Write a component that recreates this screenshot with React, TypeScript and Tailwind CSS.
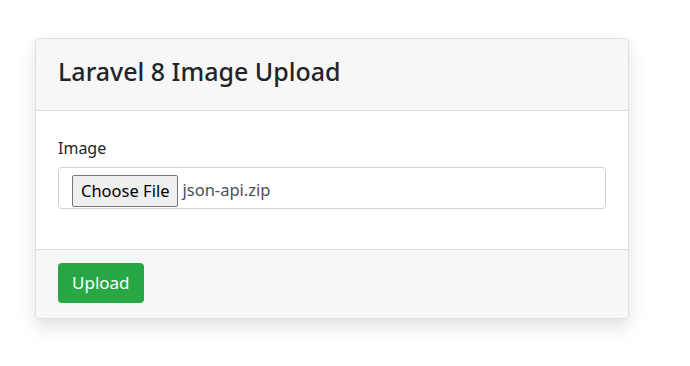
export default function App() {
    return (
        <div className="min-h-[366px] bg-white pt-[38px] pl-[35px] font-['Noto_Sans',sans-serif]">
            <div className="w-[594px] rounded border border-[#dfdfdf] bg-white shadow-[0_8px_18px_rgba(0,0,0,0.12)]">
                <div className="border-b border-[#dfdfdf] bg-[#f7f7f7] rounded-t px-[22px] h-[72px] flex items-center pb-[6px]">
                    <h1 className="text-[25px] font-medium text-[#212529] leading-none">Laravel 8 Image Upload</h1>
                </div>
                <div className="px-[22px] pt-[25px] pb-[40px]">
                    <label className="block text-[16px] text-[#212529] leading-6">Image</label>
                    <div className="mt-[7px] h-[42px] rounded border border-[#ced4da] pl-[13px] flex items-end pb-px">
                        <span className="h-[32px] px-[8px] flex items-center rounded-[2px] border border-[#767676] bg-[#efefef] text-[16.5px] text-black">
                            Choose File
                        </span>
                        <span className="ml-[4px] mb-[4px] text-[16.5px] text-[#495057]">json-api.zip</span>
                    </div>
                </div>
                <div className="border-t border-[#dfdfdf] bg-[#f7f7f7] rounded-b px-[22px] pt-[13px] pb-[15px]">
                    <button className="h-[40px] px-[14px] rounded bg-[#28a745] text-white text-[17px]">Upload</button>
                </div>
            </div>
        </div>
    );
}
